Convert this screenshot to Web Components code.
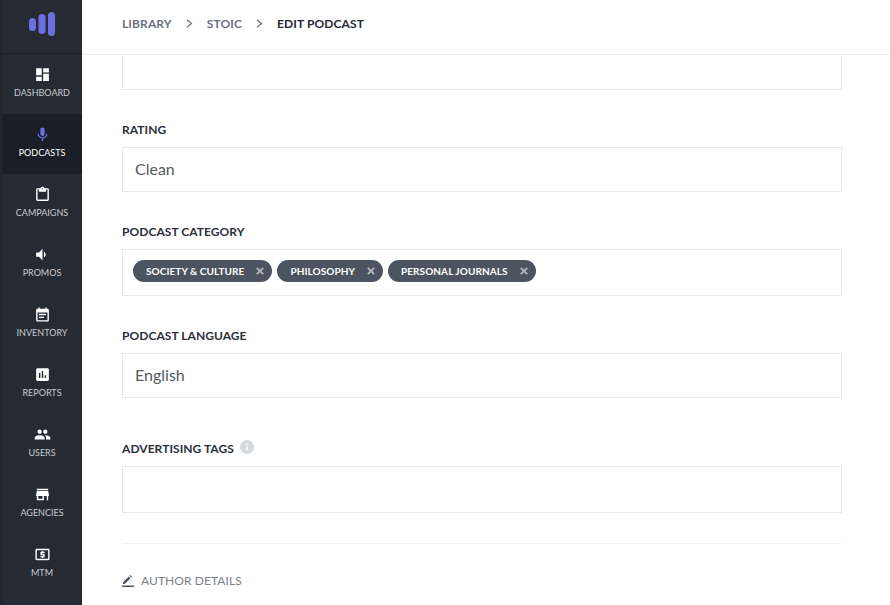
<!DOCTYPE html>
<html>
<head>
<meta charset="utf-8">
<title>Edit podcast</title>
<style>
    html, body {
        margin: 0;
        height: 100%;
        overflow: hidden;
        background-color: #fff;
        font-family: "Lato", "Liberation Sans", sans-serif;
    }
    .app {
        display: flex;
        height: 605px;
    }
    .main {
        flex: 1;
        min-width: 0;
        display: flex;
        flex-direction: column;
    }
    .form {
        padding: 0 48px 0 40px;
    }
</style>
</head>
<body>
<div class="app">
    <side-bar>
        <nav-item label="DASHBOARD"><svg viewBox="0 0 24 24"><path d="M3 13h8V3H3v10zm0 8h8v-6H3v6zm10 0h8V11h-8v10zm0-18v6h8V3h-8z"/></svg></nav-item>
        <nav-item label="PODCASTS" active><svg viewBox="0 0 24 24"><path d="M12 14c1.66 0 3-1.34 3-3V5c0-1.66-1.34-3-3-3S9 3.34 9 5v6c0 1.66 1.34 3 3 3zm5.3-3c0 3-2.54 5.1-5.3 5.1S6.700 14 6.700 11H5c0 3.410 2.720 6.230 6 6.720V21h2v-3.280c3.280-.48 6-3.300 6-6.720h-1.700z"/></svg></nav-item>
        <nav-item label="CAMPAIGNS"><svg viewBox="0 0 24 24"><path d="M19 3h-4.180C14.400 1.840 13.300 1 12 1s-2.400.84-2.820 2H5c-1.100 0-2 .9-2 2v14c0 1.100.9 2 2 2h14c1.100 0 2-.9 2-2V5c0-1.100-.9-2-2-2zm-7 0c.55 0 1 .45 1 1s-.45 1-1 1-1-.45-1-1 .45-1 1-1zm7 16H5V5h2v3h10V5h2v14z"/></svg></nav-item>
        <nav-item label="PROMOS"><svg viewBox="0 0 24 24"><path d="M3 9v6h4l5 5V4L7 9H3zm13.500 3c0-1.770-1.020-3.290-2.500-4.030v8.050c1.480-.73 2.500-2.250 2.500-4.020z"/></svg></nav-item>
        <nav-item label="INVENTORY"><svg viewBox="0 0 24 24"><path d="M19 4h-1V2h-2v2H8V2H6v2H5c-1.100 0-2 .9-2 2v14c0 1.100.9 2 2 2h14c1.100 0 2-.9 2-2V6c0-1.100-.9-2-2-2zm0 16H5V9h14v11zM7 11h10v2H7v-2zm0 4h7v2H7v-2z"/></svg></nav-item>
        <nav-item label="REPORTS"><svg viewBox="0 0 24 24"><path d="M19 3H5c-1.100 0-2 .9-2 2v14c0 1.100.9 2 2 2h14c1.100 0 2-.9 2-2V5c0-1.100-.9-2-2-2zM9 17H7v-7h2v7zm4 0h-2V7h2v10zm4 0h-2v-4h2v4z"/></svg></nav-item>
        <nav-item label="USERS"><svg viewBox="0 0 24 24"><path d="M16 11c1.660 0 2.990-1.340 2.990-3S17.660 5 16 5s-3 1.340-3 3 1.340 3 3 3zm-8 0c1.660 0 2.990-1.340 2.990-3S9.660 5 8 5 5 6.340 5 8s1.340 3 3 3zm0 2c-2.330 0-7 1.170-7 3.500V19h14v-2.500C15 14.170 10.330 13 8 13zm8 0c-.29 0-.62.02-.97.05 1.160.84 1.970 1.970 1.970 3.450V19h6v-2.500c0-2.330-4.670-3.500-7-3.500z"/></svg></nav-item>
        <nav-item label="AGENCIES"><svg viewBox="0 0 24 24"><path d="M20 4H4v2h16V4zm1 10v-2l-1-5H4l-1 5v2h1v6h10v-6h4v6h2v-6h1zm-9 4H6v-4h6v4z"/></svg></nav-item>
        <nav-item label="MTM"><svg viewBox="0 0 24 24"><path d="M20 4H4c-1.110 0-2 .89-2 2v12c0 1.110.89 2 2 2h16c1.110 0 2-.89 2-2V6c0-1.110-.89-2-2-2zm0 14H4V6h16v12zM11 17h2v-1h1c.55 0 1-.45 1-1v-3c0-.55-.45-1-1-1h-3v-1h4V8h-2V7h-2v1h-1c-.55 0-1 .45-1 1v3c0 .55.45 1 1 1h3v1H9v2h2v1z"/></svg></nav-item>
    </side-bar>
    <div class="main">
        <top-bar>
            <crumb-link>LIBRARY</crumb-link>
            <crumb-link>STOIC</crumb-link>
            <crumb-link current>EDIT PODCAST</crumb-link>
        </top-bar>
        <div class="form">
            <text-box cut></text-box>
            <form-field label="RATING" gap="31"><text-box>Clean</text-box></form-field>
            <form-field label="PODCAST CATEGORY" gap="31">
                <tag-box>
                    <tag-chip>SOCIETY &amp; CULTURE</tag-chip>
                    <tag-chip>PHILOSOPHY</tag-chip>
                    <tag-chip>PERSONAL JOURNALS</tag-chip>
                </tag-box>
            </form-field>
            <form-field label="PODCAST LANGUAGE" gap="31"><text-box>English</text-box></form-field>
            <form-field label="ADVERTISING TAGS" gap="42" info><tag-box></tag-box></form-field>
            <section-link>AUTHOR DETAILS</section-link>
        </div>
    </div>
</div>

<script>
class SideBar extends HTMLElement
{
    constructor()
    {
        super();
        this.attachShadow({mode: "open"}).innerHTML = `
        <style>
            :host {
                display: block;
                width: 80px;
                flex: none;
                border-left: 2px solid #20242c;
                background-color: #262a33;
            }
            .logo {
                display: flex;
                justify-content: center;
                align-items: flex-start;
                height: 41px;
                padding-top: 12px;
                border-bottom: 1px solid #1b1e25;
            }
            svg {
                display: block;
                width: 26px;
                height: 24px;
            }
        </style>
        <div class="logo">
            <svg viewBox="0 0 26 24" fill="#6b6fe0">
                <rect x="0" y="6" width="7" height="13" rx="3.500"/>
                <rect x="9.500" y="2" width="7" height="20" rx="3.500"/>
                <rect x="19" y="0" width="7" height="24" rx="3.500"/>
            </svg>
        </div>
        <slot></slot>`;
    }
}

class NavItem extends HTMLElement
{
    constructor()
    {
        super();
        this.attachShadow({mode: "open"}).innerHTML = `
        <style>
            :host {
                display: flex;
                flex-direction: column;
                align-items: center;
                height: 60px;
                padding-top: 12px;
                box-sizing: border-box;
                color: #fff;
                fill: #fff;
            }
            :host([active]) {
                background-color: #1b1e26;
                fill: #6b6fe0;
            }
            .icon {
                width: 17px;
                height: 17px;
            }
            ::slotted(svg) {
                display: block;
                width: 17px;
                height: 17px;
            }
            .label {
                margin-top: 3px;
                font-size: 9px;
                line-height: 13px;
                color: #c9ccd2;
            }
            :host([active]) .label {
                color: #fff;
            }
        </style>
        <div class="icon"><slot></slot></div>
        <div class="label"></div>`;
    }

    connectedCallback()
    {
        this.shadowRoot.querySelector(".label").textContent = this.getAttribute("label");
    }
}

class TopBar extends HTMLElement
{
    constructor()
    {
        super();
        this.attachShadow({mode: "open"}).innerHTML = `
        <style>
            :host {
                display: flex;
                align-items: center;
                flex: none;
                height: 55px;
                box-sizing: border-box;
                padding: 0 0 7px 40px;
                border-bottom: 1px solid #eceef0;
            }
        </style>
        <slot></slot>`;
    }
}

class CrumbLink extends HTMLElement
{
    constructor()
    {
        super();
        this.attachShadow({mode: "open"}).innerHTML = `
        <style>
            :host {
                display: flex;
                align-items: center;
                font-size: 12px;
                font-weight: 700;
                letter-spacing: 0.12px;
                color: #6c727b;
            }
            :host([current]) {
                color: #262a33;
            }
            :host([current]) svg {
                display: none;
            }
            svg {
                width: 7px;
                height: 9px;
                margin: 0 14px;
                fill: none;
                stroke: #6c727b;
                stroke-width: 1.200;
            }
        </style>
        <slot></slot>
        <svg viewBox="0 0 7 9"><path d="M1 .8 5.500 4.500 1 8.200"/></svg>`;
    }
}

class TextBox extends HTMLElement
{
    constructor()
    {
        super();
        this.attachShadow({mode: "open"}).innerHTML = `
        <style>
            :host {
                display: flex;
                align-items: center;
                height: 45px;
                padding: 0 12px 2px;
                box-sizing: border-box;
                border: 1px solid #e6e8ea;
                font-size: 16px;
                color: #555a63;
            }
            :host([cut]) {
                height: 35px;
                border-top: none;
            }
        </style>
        <slot></slot>`;
    }
}

class FormField extends HTMLElement
{
    constructor()
    {
        super();
        this.attachShadow({mode: "open"}).innerHTML = `
        <style>
            :host {
                display: block;
            }
            .label {
                display: flex;
                align-items: center;
                gap: 6px;
                height: 16px;
                margin-bottom: 10px;
                font-size: 12px;
                font-weight: 700;
                letter-spacing: 0.05px;
                color: #2b2f38;
            }
            .info {
                display: none;
                width: 14px;
                height: 14px;
                margin-top: -3px;
            }
            :host([info]) .info {
                display: block;
            }
        </style>
        <div class="label">
            <span class="text"></span>
            <svg class="info" viewBox="0 0 14 14">
                <circle cx="7" cy="7" r="7" fill="#d5d9de"/>
                <rect x="6.300" y="6" width="1.400" height="4.500" fill="#fff"/>
                <rect x="6.300" y="3.500" width="1.400" height="1.400" fill="#fff"/>
            </svg>
        </div>
        <slot></slot>`;
    }

    connectedCallback()
    {
        this.shadowRoot.querySelector(".text").textContent = this.getAttribute("label");
        this.style.paddingTop = this.getAttribute("gap") + "px";
    }
}

class TagBox extends HTMLElement
{
    constructor()
    {
        super();
        this.attachShadow({mode: "open"}).innerHTML = `
        <style>
            :host {
                display: flex;
                align-items: flex-start;
                gap: 5px;
                height: 47px;
                padding: 10px 10px 0;
                box-sizing: border-box;
                border: 1px solid #e6e8ea;
            }
        </style>
        <slot></slot>`;
    }
}

class TagChip extends HTMLElement
{
    constructor()
    {
        super();
        this.attachShadow({mode: "open"}).innerHTML = `
        <style>
            :host {
                display: flex;
                align-items: center;
                height: 22px;
                padding: 0 8px 0 13px;
                border-radius: 11px;
                background-color: #4c5361;
                font-size: 10px;
                font-weight: 700;
                letter-spacing: 0.08px;
                color: #fff;
            }
            svg {
                width: 8px;
                height: 8px;
                margin-left: 12px;
                stroke: #b5b9c0;
                stroke-width: 1.800;
            }
        </style>
        <slot></slot>
        <svg viewBox="0 0 8 8"><path d="M.8.8l6.400 6.400M7.200.8.800 7.200"/></svg>`;
    }
}

class SectionLink extends HTMLElement
{
    constructor()
    {
        super();
        this.attachShadow({mode: "open"}).innerHTML = `
        <style>
            :host {
                display: flex;
                align-items: center;
                gap: 7px;
                margin-top: 30px;
                padding-top: 29px;
                border-top: 1px solid #f1f2f4;
                font-size: 12px;
                letter-spacing: 0.08px;
                color: #7c8189;
            }
            svg {
                width: 12px;
                height: 12px;
                fill: #4c5361;
            }
        </style>
        <svg viewBox="0 0 12 12"><path d="M0 10.500h12V12H0zM1 7.300 6.800 1.500l1.700 1.700L2.700 9H1zM7.500.8l.8-.8 1.700 1.700-.8.8z"/></svg>
        <slot></slot>`;
    }
}

customElements.define("side-bar", SideBar);
customElements.define("nav-item", NavItem);
customElements.define("top-bar", TopBar);
customElements.define("crumb-link", CrumbLink);
customElements.define("text-box", TextBox);
customElements.define("form-field", FormField);
customElements.define("tag-box", TagBox);
customElements.define("tag-chip", TagChip);
customElements.define("section-link", SectionLink);
</script>
</body>
</html>
